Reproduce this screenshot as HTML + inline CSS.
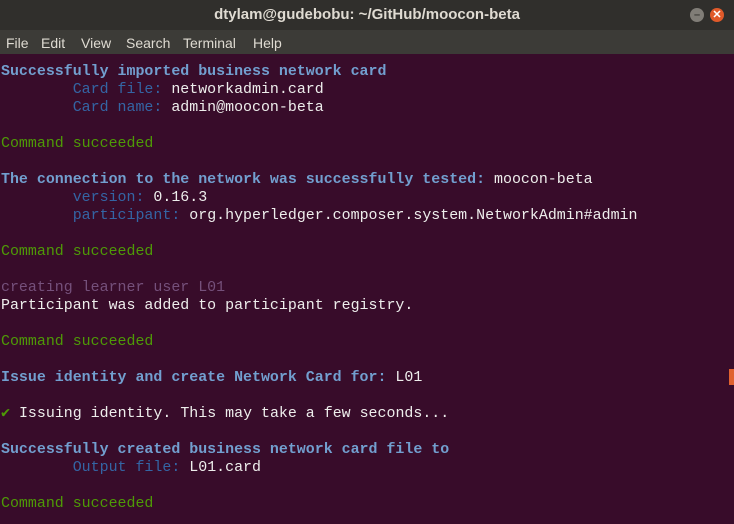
<!DOCTYPE html>
<html><head><style>
*{margin:0;padding:0}
body{width:734px;height:524px;overflow:hidden;background:#380c2a;font-family:"Liberation Sans",sans-serif}
.title{height:30px;background:#302f2c;color:#dfdbd2;font-size:15px;font-weight:bold;text-align:center;line-height:30px;position:relative}
.btn{position:absolute;top:8px;width:14px;height:14px;border-radius:50%;font-size:11px;line-height:14px;text-align:center}
.menu{height:24px;background:#3c3b37;color:#dfdbd2;font-size:14px;line-height:26px;position:relative}
.menu span{position:absolute;top:0}
pre{font-family:"Liberation Mono",monospace;font-size:14.95px;line-height:18px;color:#eeeeec;padding:9px 0 0 1px;letter-spacing:0}
.b{color:#729fcf;font-weight:bold}.d{color:#3465a4}.g{color:#4e9a06}.p{color:#75507b}
.cur{position:absolute;left:729px;top:369px;width:5px;height:16px;background:#e0622f}
</style></head><body>
<div class="title">dtylam@gudebobu: ~/GitHub/moocon-beta
<div class="btn" style="left:690px;background:#807d77;color:#3c3b37">–</div>
<div class="btn" style="left:710px;background:#e05a2a;color:#fff">✕</div></div>
<div class="menu"><span style="left:6px">File</span><span style="left:41px">Edit</span><span style="left:81px">View</span><span style="left:126px">Search</span><span style="left:183px">Terminal</span><span style="left:253px">Help</span></div>
<pre><span class="b">Successfully imported business network card</span>
        <span class="d">Card file:</span> networkadmin.card
        <span class="d">Card name:</span> admin@moocon-beta

<span class="g">Command succeeded</span>

<span class="b">The connection to the network was successfully tested:</span> moocon-beta
        <span class="d">version:</span> 0.16.3
        <span class="d">participant:</span> org.hyperledger.composer.system.NetworkAdmin#admin

<span class="g">Command succeeded</span>

<span class="p">creating learner user L01</span>
Participant was added to participant registry.

<span class="g">Command succeeded</span>

<span class="b">Issue identity and create Network Card for:</span> L01

<span class="g">✔</span> Issuing identity. This may take a few seconds...

<span class="b">Successfully created business network card file to</span>
        <span class="d">Output file:</span> L01.card

<span class="g">Command succeeded</span>
</pre>
<div class="cur"></div>
</body></html>
